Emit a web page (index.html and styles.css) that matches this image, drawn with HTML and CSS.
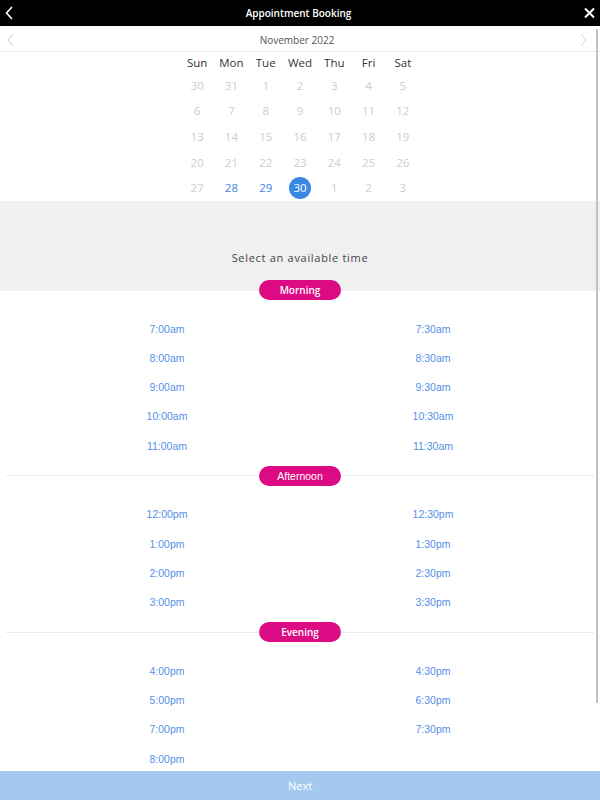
FILE: index.html
```html
<!DOCTYPE html>
<html lang="en">
<head>
<meta charset="utf-8">
<title>Appointment Booking</title>
<link rel="stylesheet" href="styles.css">
</head>
<body>
<div class="app">
  <header class="topbar">
    <svg class="icon back" width="14" height="26" viewBox="0 0 14 26"><polyline points="11,7 5.5,13 11,19" fill="none" stroke="#fff" stroke-width="1.6"/></svg>
    <h1 class="title">Appointment Booking</h1>
    <svg class="icon close" width="14" height="26" viewBox="0 0 14 26"><path d="M3 8.5 L12 17.5 M12 8.5 L3 17.5" stroke="#fff" stroke-width="2"/></svg>
  </header>

  <main class="scroll">
    <div class="month-bar">
      <svg class="month-nav" width="14" height="25" viewBox="0 0 14 25"><polyline points="12,7 7,13 12,19" fill="none" stroke="#d4d4d4" stroke-width="1"/></svg>
      <span class="month">November 2022</span>
      <svg class="month-nav right" width="14" height="25" viewBox="0 0 14 25"><polyline points="2,7 7,13 2,19" fill="none" stroke="#d4d4d4" stroke-width="1"/></svg>
    </div>

    <div class="calendar">
      <span class="dow">Sun</span><span class="dow">Mon</span><span class="dow">Tue</span><span class="dow">Wed</span><span class="dow">Thu</span><span class="dow">Fri</span><span class="dow">Sat</span>
      <span class="day">30</span><span class="day">31</span><span class="day">1</span><span class="day">2</span><span class="day">3</span><span class="day">4</span><span class="day">5</span>
      <span class="day">6</span><span class="day">7</span><span class="day">8</span><span class="day">9</span><span class="day">10</span><span class="day">11</span><span class="day">12</span>
      <span class="day">13</span><span class="day">14</span><span class="day">15</span><span class="day">16</span><span class="day">17</span><span class="day">18</span><span class="day">19</span>
      <span class="day">20</span><span class="day">21</span><span class="day">22</span><span class="day">23</span><span class="day">24</span><span class="day">25</span><span class="day">26</span>
      <span class="day">27</span><span class="day available">28</span><span class="day available">29</span><span class="day selected"><span class="bubble">30</span></span><span class="day">1</span><span class="day">2</span><span class="day">3</span>
    </div>

    <div class="prompt">Select an available time</div>

    <div class="divider divider-first"><span class="pill">Morning</span></div>
    <div class="slots">
      <a class="slot">7:00am</a><a class="slot">7:30am</a>
      <a class="slot">8:00am</a><a class="slot">8:30am</a>
      <a class="slot">9:00am</a><a class="slot">9:30am</a>
      <a class="slot">10:00am</a><a class="slot">10:30am</a>
      <a class="slot">11:00am</a><a class="slot">11:30am</a>
    </div>

    <div class="divider"><span class="pill pill-arial">Afternoon</span></div>
    <div class="slots">
      <a class="slot">12:00pm</a><a class="slot">12:30pm</a>
      <a class="slot">1:00pm</a><a class="slot">1:30pm</a>
      <a class="slot">2:00pm</a><a class="slot">2:30pm</a>
      <a class="slot">3:00pm</a><a class="slot">3:30pm</a>
    </div>

    <div class="divider"><span class="pill">Evening</span></div>
    <div class="slots">
      <a class="slot">4:00pm</a><a class="slot">4:30pm</a>
      <a class="slot">5:00pm</a><a class="slot">6:30pm</a>
      <a class="slot">7:00pm</a><a class="slot">7:30pm</a>
      <a class="slot">8:00pm</a><span></span>
    </div>
  </main>

  <footer class="next-bar">Next</footer>
  <div class="scroll-thumb"></div>
</div>
</body>
</html>
```

FILE: styles.css
```css
* { box-sizing: border-box; }

html, body {
  margin: 0;
  padding: 0;
  background: #fff;
}

body {
  font-family: "Open Sans", "Liberation Sans", sans-serif;
  width: 600px;
  height: 800px;
  overflow: hidden;
}

.app {
  position: relative;
  display: flex;
  flex-direction: column;
  height: 800px;
}

.topbar {
  height: 26px;
  flex: 0 0 26px;
  background: #000;
  display: grid;
  grid-template-columns: 1fr auto 1fr;
  align-items: center;
  padding: 0 4px 0 1px;
}

.icon { display: block; }
.close { justify-self: end; }

.title {
  margin: 0;
  color: #fff;
  font-size: 10px;
  font-weight: 600;
  line-height: 26px;
}

.scroll {
  flex: 1 1 auto;
  overflow: hidden;
}

.month-bar {
  height: 26px;
  display: grid;
  grid-template-columns: 1fr auto 1fr;
  align-items: center;
  padding: 0 7px 0 1px;
  border-bottom: 1px solid #ececec;
}

.month-nav { display: block; }
.month-nav.right { justify-self: end; }

.month {
  font-size: 10px;
  color: #555;
  line-height: 25px;
  padding-top: 2px;
}

.calendar {
  width: 240px;
  margin: 0 auto;
  display: grid;
  grid-template-columns: repeat(7, 1fr);
  grid-template-rows: 21px repeat(5, 25.6px);
  align-items: center;
  justify-items: center;
}

.dow {
  font-size: 11.5px;
  color: #333;
  line-height: 20px;
  padding-top: 1px;
}

.day {
  font-size: 11.5px;
  color: #cdcdcd;
  line-height: 16px;
}

.day.available { color: #3d84e3; }

.day.selected { display: flex; }

.bubble {
  width: 22px;
  height: 22px;
  border-radius: 50%;
  background: #3a88e4;
  color: #fff;
  display: flex;
  align-items: center;
  justify-content: center;
  font-size: 11.5px;
}

.prompt {
  background: #f0f0f0;
  height: 79px;
  padding-top: 49px;
  text-align: center;
  font-size: 11px;
  line-height: 16px;
  letter-spacing: 0.7px;
  color: #444;
}

.divider {
  height: 20px;
  margin: 0 6px;
  display: flex;
  align-items: center;
}

.divider::before,
.divider::after {
  content: "";
  flex: 1 1 0;
  height: 1px;
  background: #ebebeb;
}

.divider-first {
  margin: 0;
  background: linear-gradient(#f0f0f0 55%, #fff 55%);
}

.divider-first::before,
.divider-first::after { background: transparent; }

.pill {
  width: 82px;
  height: 20px;
  border-radius: 10px;
  background: #dc0a83;
  color: #fff;
  font-size: 10px;
  font-weight: 600;
  line-height: 20px;
  text-align: center;
}

.pill-arial {
  font-family: "Liberation Sans", Arial, sans-serif;
  font-size: 10.5px;
  font-weight: 400;
}

.slots {
  display: grid;
  grid-template-columns: 1fr 1fr;
  grid-auto-rows: 29.25px;
  align-items: center;
  justify-items: center;
  padding: 14px 34px 5.5px;
}

.slot {
  font-family: "Liberation Sans", Arial, sans-serif;
  font-size: 10.5px;
  color: #5590e6;
  text-decoration: none;
}

.next-bar {
  height: 29px;
  flex: 0 0 29px;
  background: #a5c8ef;
  color: #fff;
  font-size: 11px;
  line-height: 29px;
  text-align: center;
}

.scroll-thumb {
  position: absolute;
  left: 596px;
  top: 29px;
  width: 2px;
  height: 674px;
  background: #c2c2c2;
}
```
